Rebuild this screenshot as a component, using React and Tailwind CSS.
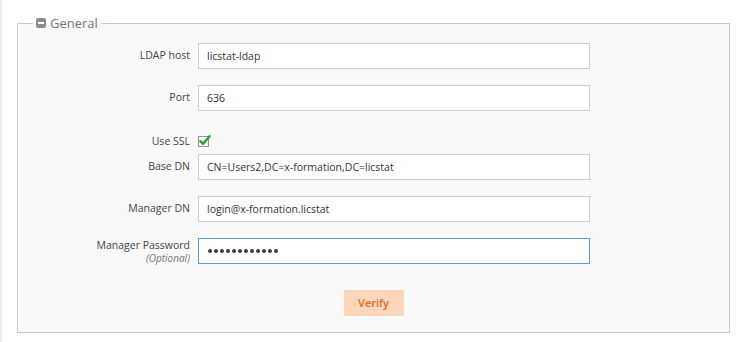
import React from 'react';

const font = { fontFamily: '"Open Sans", "Liberation Sans", sans-serif' };

function Row({ label, children, className = '' }) {
  return (
    <div className={`flex items-center ${className}`}>
      <div className="w-[180px] pr-[8px] text-right text-[10.5px] text-[#444]">{label}</div>
      {children}
    </div>
  );
}

function TextBox({ value }) {
  return (
    <input
      type="text"
      readOnly
      value={value}
      className="h-[26px] w-[392px] border border-[#cfcfcf] bg-white px-[8px] text-[10.5px] text-[#333] outline-none"
      style={font}
    />
  );
}

function PasswordBox({ length }) {
  return (
    <div className="flex h-[26px] w-[392px] items-center gap-[2px] border border-[#5b9bd5] bg-white pl-[9px]">
      {Array.from({ length }).map((_, i) => (
        <span key={i} className="h-[4px] w-[4px] rounded-full bg-[#3a3a3a]" />
      ))}
    </div>
  );
}

function CheckIcon() {
  return (
    <svg width="14" height="14" viewBox="0 0 14 14" className="mt-[-2px]">
      <rect x="0.5" y="2.5" width="10" height="10" fill="#fff" stroke="#8c9a8c" />
      <path d="M2.4 7.2 L5 9.9 L11.6 2.2" fill="none" stroke="#2ea12e" strokeWidth="2.4" strokeLinecap="round" strokeLinejoin="round" />
    </svg>
  );
}

export default function App() {
  return (
    <div className="min-h-[342px] w-[746px] border-l-2 border-[#efefef] bg-white pt-[14px]" style={font}>
      <fieldset className="ml-[15px] w-[713px] border border-[#c9c9c9] bg-[#f9f9f9] pb-[16px]">
        <legend className="ml-[15px] flex h-[18px] items-center gap-[4px] px-[3px] text-[13px] leading-[18px] text-[#777]">
          <span className="flex h-[10px] w-[10px] items-center justify-center rounded-[2px] bg-[#8d8d8d]">
            <span className="h-[2px] w-[6px] bg-white" />
          </span>
          General
        </legend>

        <Row label="LDAP host" className="mt-[11px]">
          <TextBox value="licstat-ldap" />
        </Row>
        <Row label="Port" className="mt-[16px]">
          <TextBox value="636" />
        </Row>
        <Row label="Use SSL" className="mt-[25px] h-[12px]">
          <CheckIcon />
        </Row>
        <Row label="Base DN" className="mt-[6px]">
          <TextBox value="CN=Users2,DC=x-formation,DC=licstat" />
        </Row>
        <Row label="Manager DN" className="mt-[16px]">
          <TextBox value="login@x-formation.licstat" />
        </Row>
        <div className="mt-[16px] flex items-start">
          <div className="w-[180px] pr-[8px] pt-[1px] text-right text-[#444]">
            <div className="text-[10.5px] leading-[13px]">Manager Password</div>
            <div className="text-[10px] italic leading-[13px] text-[#777]">(Optional)</div>
          </div>
          <PasswordBox length={12} />
        </div>

        <div className="mt-[25px] flex justify-center">
          <button type="button" className="h-[26px] w-[60px] bg-[#ffd6b9] text-[11px] font-semibold text-[#e2692a]">
            Verify
          </button>
        </div>
      </fieldset>
    </div>
  );
}
